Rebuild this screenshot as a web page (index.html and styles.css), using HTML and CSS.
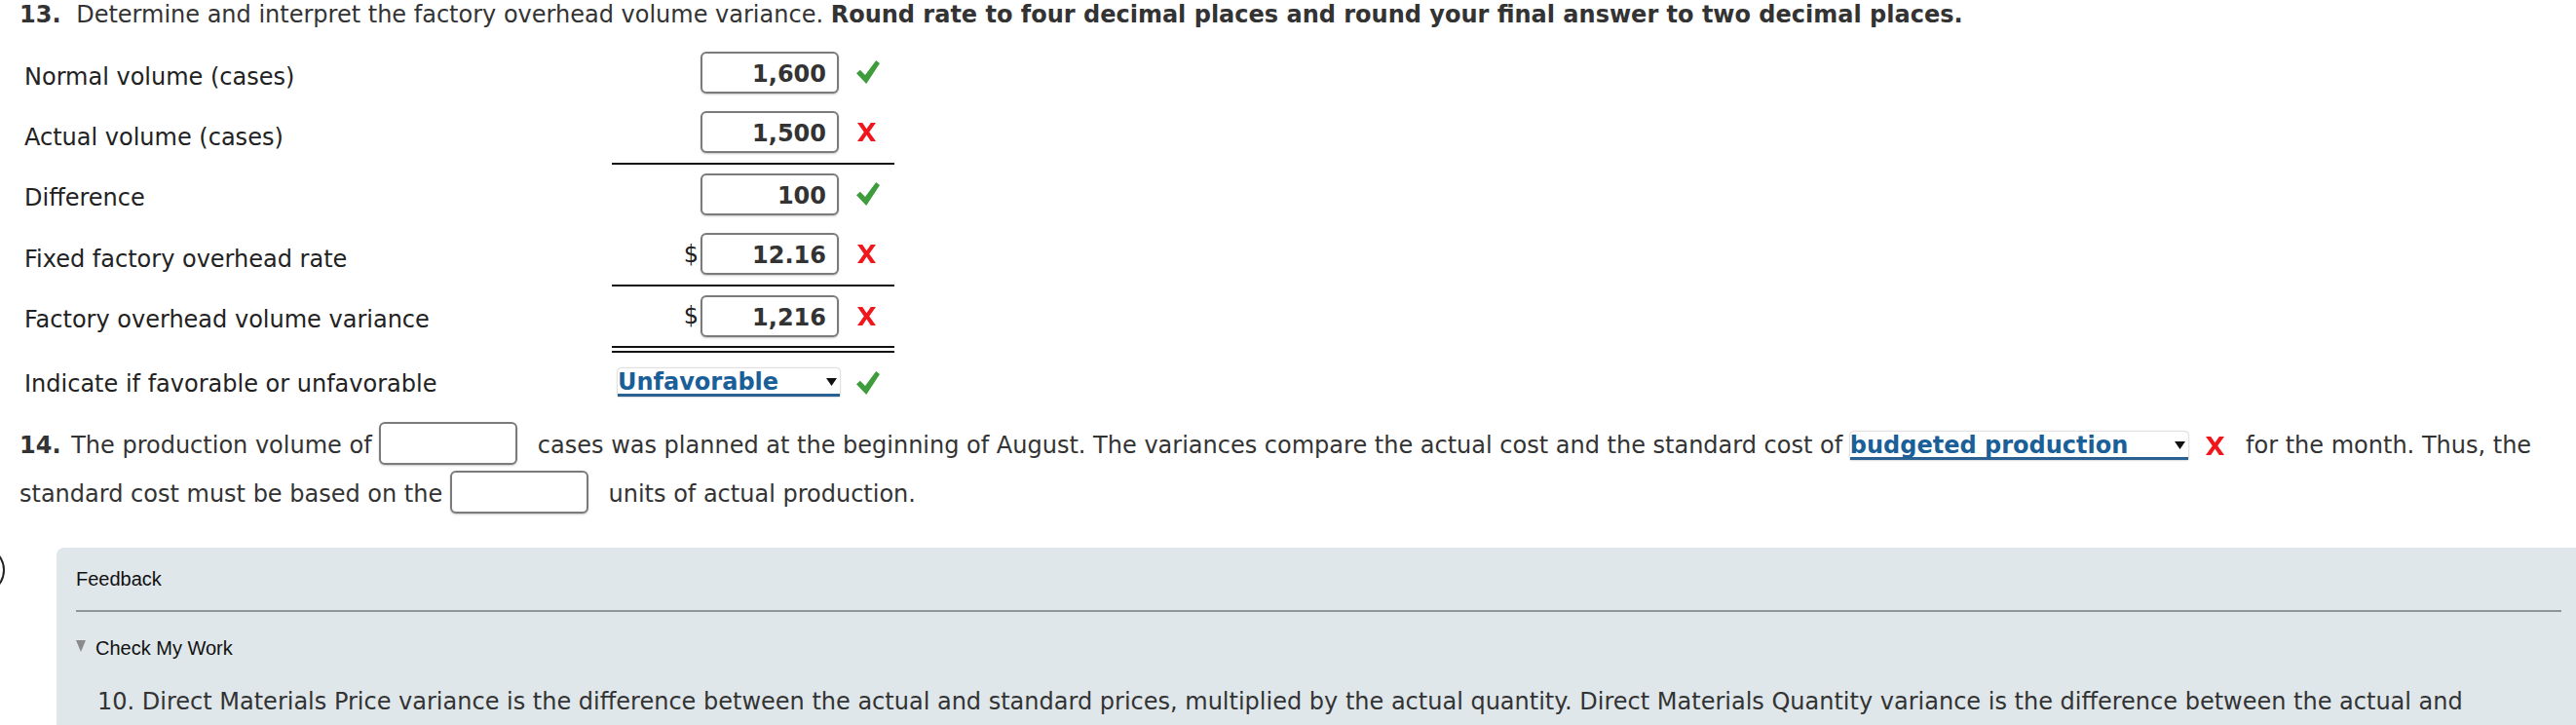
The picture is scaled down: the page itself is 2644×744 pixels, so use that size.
FILE: index.html
```html
<!DOCTYPE html>
<html lang="en">
<head>
<meta charset="utf-8">
<title>Factory overhead volume variance</title>
<link rel="stylesheet" href="styles.css">
</head>
<body>
<main class="question">
  <p class="prompt"><span class="qnum">13.</span> Determine and interpret the factory overhead volume variance. <strong>Round rate to four decimal places and round your final answer to two decimal places.</strong></p>

  <div class="worksheet">
    <div class="row">
      <div class="label">Normal volume (cases)</div>
      <div class="value">
        <span class="cur"></span>
        <span class="field">1,600</span>
        <svg class="mark ok" viewBox="0 0 24 24"><polygon points="0,13.2 3.8,9.8 9,15 20.2,0 24,3 10.2,24"/></svg>
      </div>
    </div>
    <div class="row">
      <div class="label">Actual volume (cases)</div>
      <div class="value">
        <span class="cur"></span>
        <span class="field">1,500</span>
        <svg class="mark bad" viewBox="0 0 19 19"><polygon points="0,0 5.2,0 9.5,6.3 13.8,0 19,0 12.2,9.4 19,19 13.8,19 9.5,12.6 5.2,19 0,19 6.8,9.4"/></svg>
      </div>
    </div>
    <div class="row">
      <div class="label">Difference</div>
      <div class="value rule">
        <span class="cur"></span>
        <span class="field">100</span>
        <svg class="mark ok" viewBox="0 0 24 24"><polygon points="0,13.2 3.8,9.8 9,15 20.2,0 24,3 10.2,24"/></svg>
      </div>
    </div>
    <div class="row">
      <div class="label">Fixed factory overhead rate</div>
      <div class="value">
        <span class="cur">$</span>
        <span class="field">12.16</span>
        <svg class="mark bad" viewBox="0 0 19 19"><polygon points="0,0 5.2,0 9.5,6.3 13.8,0 19,0 12.2,9.4 19,19 13.8,19 9.5,12.6 5.2,19 0,19 6.8,9.4"/></svg>
      </div>
    </div>
    <div class="row">
      <div class="label">Factory overhead volume variance</div>
      <div class="value rule">
        <span class="cur">$</span>
        <span class="field">1,216</span>
        <svg class="mark bad" viewBox="0 0 19 19"><polygon points="0,0 5.2,0 9.5,6.3 13.8,0 19,0 12.2,9.4 19,19 13.8,19 9.5,12.6 5.2,19 0,19 6.8,9.4"/></svg>
      </div>
    </div>
    <div class="row">
      <div class="label">Indicate if favorable or unfavorable</div>
      <div class="value double">
        <span class="dropdown table-dd"><span class="dd-text">Unfavorable</span><svg class="dd-arrow" viewBox="0 0 11 8"><polygon points="0,0 11,0 5.5,8"/></svg></span>
        <svg class="mark ok after-dd" viewBox="0 0 24 24"><polygon points="0,13.2 3.8,9.8 9,15 20.2,0 24,3 10.2,24"/></svg>
      </div>
    </div>
  </div>

  <p class="para"><span class="qnum small">14.</span> The production volume of <span class="blank"></span> cases was planned at the beginning of August. The variances compare the actual cost and the standard cost of <span class="dropdown inline-dd"><span class="dd-text">budgeted production</span><svg class="dd-arrow" viewBox="0 0 11 8"><polygon points="0,0 11,0 5.5,8"/></svg></span> <svg class="inline-mark" viewBox="0 0 19 19"><polygon points="0,0 5.2,0 9.5,6.3 13.8,0 19,0 12.2,9.4 19,19 13.8,19 9.5,12.6 5.2,19 0,19 6.8,9.4"/></svg> for the month. Thus, the<br>standard cost must be based on the <span class="blank"></span> units of actual production.</p>
</main>

<section class="feedback-row">
  <div class="gutter"><span class="ring"></span></div>
  <div class="panel">
    <div class="fb-title">Feedback</div>
    <hr class="fb-rule">
    <div class="cmw"><svg class="tri" viewBox="0 0 10 12"><polygon points="0,0 10,0 5,12"/></svg>Check My Work</div>
    <p class="fb-text">10. Direct Materials Price variance is the difference between the actual and standard prices, multiplied by the actual quantity. Direct Materials Quantity variance is the difference between the actual and</p>
  </div>
</section>
</body>
</html>
```

FILE: styles.css
```css
html, body {
  margin: 0;
  padding: 0;
  overflow: hidden;
  background: #fff;
}

body {
  width: 2644px;
  height: 744px;
  font-family: "DejaVu Sans", Verdana, sans-serif;
  color: #333;
}

.question {
  padding: 1px 0 0 20px;
}

.prompt {
  margin: 0;
  font-size: 24px;
  line-height: 28px;
}

.qnum {
  font-weight: bold;
  margin-right: 8px;
}

.qnum.small {
  margin-right: 3px;
}

.worksheet {
  margin: 14.5px 0 0 5px;
}

.row {
  display: flex;
  align-items: center;
}

.label {
  width: 603px;
  flex: none;
  padding-top: 10px;
  font-size: 24px;
  line-height: 28px;
  color: #222;
}

.value {
  width: 290px;
  min-height: 43px;
  flex: none;
  display: flex;
  align-items: center;
  padding: 9px 0 9.5px;
}

.value.rule {
  border-top: 2px solid #111;
}

.value.double {
  border-top: 7px double #111;
}

.cur {
  width: 91px;
  flex: none;
  box-sizing: border-box;
  padding-right: 2px;
  text-align: right;
  font-size: 24px;
  line-height: 28px;
  color: #222;
}

.field {
  width: 142px;
  height: 43px;
  flex: none;
  box-sizing: border-box;
  border: 2px solid #7b7b7b;
  border-radius: 6px;
  box-shadow: 0 1px 2px rgba(0, 0, 0, 0.22);
  padding: 4px 11px 0 0;
  line-height: 35px;
  text-align: right;
  font-weight: bold;
  font-size: 24px;
  color: #333;
  background: #fff;
}

.mark {
  flex: none;
}

.mark.ok {
  width: 24px;
  height: 24px;
  margin-left: 18px;
  fill: #3f9c3c;
}

.mark.bad {
  width: 19px;
  height: 19px;
  margin-left: 19px;
  fill: #f0161c;
}

.mark.after-dd {
  margin-left: 17px;
}

.dropdown {
  display: inline-flex;
  align-items: center;
  justify-content: space-between;
  box-sizing: border-box;
  background: #fff;
  border-bottom: 3px solid #2a6092;
  border-radius: 4px 4px 0 0;
  box-shadow: 0 0 2px rgba(0, 0, 0, 0.45);
  padding: 2px 3px 0 0;
  font-weight: bold;
  font-size: 24px;
  line-height: 24px;
  color: #1b5f99;
}

.table-dd {
  width: 228px;
  margin-left: 6px;
}

.inline-dd {
  width: 347px;
}

.dd-arrow {
  width: 11px;
  height: 8px;
  fill: #111;
  flex: none;
}

.inline-mark {
  width: 19px;
  height: 19px;
  fill: #f0161c;
  vertical-align: -2px;
  margin: 0 14px 0 11px;
}

.para {
  margin: 8px 0 0;
  font-size: 24px;
  line-height: 50px;
  color: #333;
}

.blank {
  display: inline-block;
  width: 142px;
  height: 44px;
  box-sizing: border-box;
  border: 2px solid #7b7b7b;
  border-radius: 6px;
  box-shadow: 0 1px 2px rgba(0, 0, 0, 0.22);
  vertical-align: -12px;
  margin: 0 13px 0 0;
  background: #fff;
}

.feedback-row {
  display: flex;
  margin-top: 30px;
}

.gutter {
  width: 58px;
  flex: none;
}

.ring {
  display: block;
  width: 50px;
  height: 50px;
  box-sizing: border-box;
  border: 2.5px solid #222;
  border-radius: 50%;
  margin: -2px 0 0 -45px;
}

.panel {
  flex: 1;
  background: #dfe7ea;
  border-radius: 8px 0 0 0;
  padding: 21px 15px 12px 20px;
}

.fb-title {
  font-family: "Liberation Sans", Arial, sans-serif;
  font-size: 20px;
  line-height: 23px;
  color: #111;
}

.fb-rule {
  margin: 20px 0 0;
  border: 0;
  height: 2px;
  background: #8f9699;
}

.cmw {
  margin-top: 26.5px;
  display: flex;
  align-items: flex-start;
  font-family: "Liberation Sans", Arial, sans-serif;
  font-size: 20px;
  line-height: 23px;
  color: #111;
}

.tri {
  width: 10px;
  height: 12px;
  margin: 3px 10px 0 0;
  fill: #8a8a8a;
  flex: none;
}

.fb-text {
  margin: 25px 0 0 22px;
  font-size: 24px;
  line-height: 36px;
  color: #333;
}
```
